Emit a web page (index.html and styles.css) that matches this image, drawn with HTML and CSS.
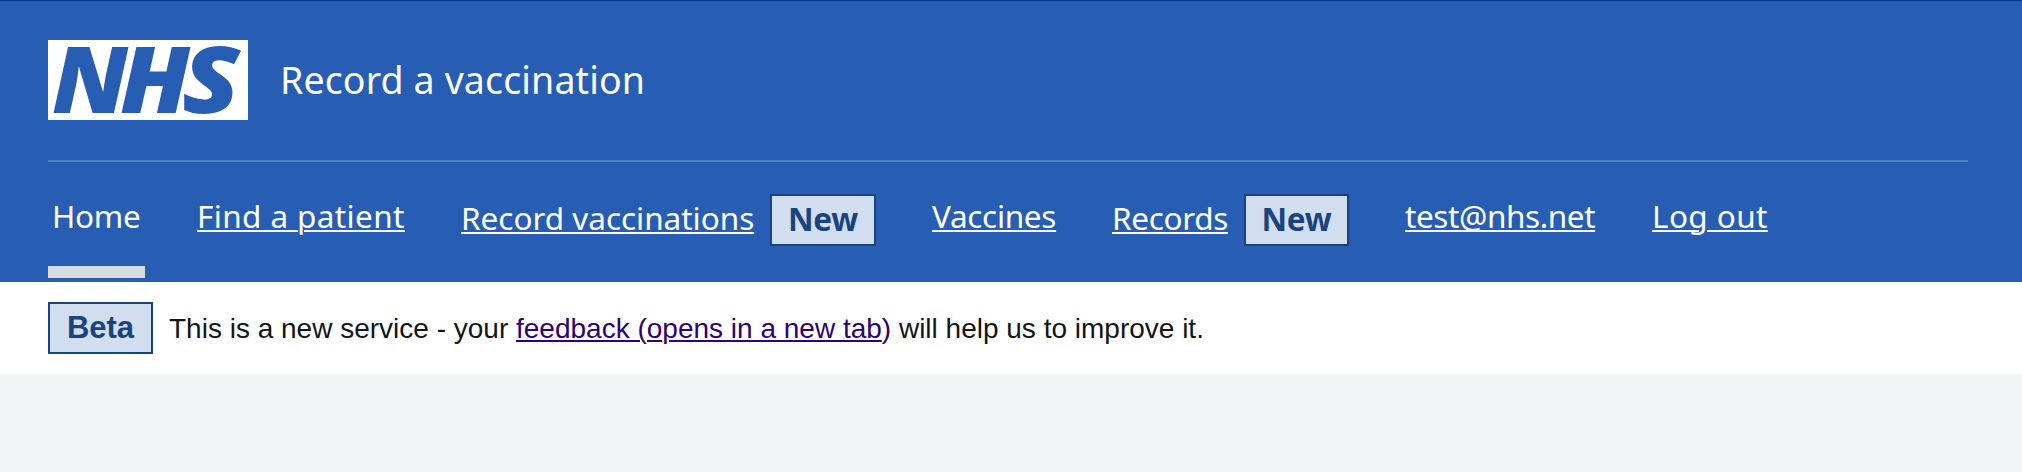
FILE: index.html
```html
<!DOCTYPE html>
<html lang="en">
<head>
<meta charset="utf-8">
<title>Record a vaccination</title>
<link rel="stylesheet" href="styles.css">
</head>
<body>
<header class="header">
  <div class="header-top">
    <svg class="logo" viewBox="0 0 200 80" role="img" aria-label="NHS">
      <rect width="200" height="80" fill="#fff"/>
      <text class="logo-letter" y="73" x="4" textLength="76" lengthAdjust="spacingAndGlyphs">N</text>
      <text class="logo-letter" y="73" x="72" textLength="70" lengthAdjust="spacingAndGlyphs">H</text>
      <text class="logo-letter" y="73" x="134" textLength="58" lengthAdjust="spacingAndGlyphs">S</text>
    </svg>
    <span class="service">Record a vaccination</span>
  </div>
  <nav class="nav">
    <a class="item current"><span class="label home">Home</span></a>
    <a class="item"><span class="label find">Find a patient</span></a>
    <a class="item tagged"><span class="label recvac">Record vaccinations</span><strong class="tag">New</strong></a>
    <a class="item"><span class="label vaccines">Vaccines</span></a>
    <a class="item tagged"><span class="label records">Records</span><strong class="tag narrow">New</strong></a>
    <a class="item"><span class="label email">test@nhs.net</span></a>
    <a class="item"><span class="label logout">Log out</span></a>
  </nav>
</header>
<div class="banner">
  <strong class="tag beta">Beta</strong>
  <p class="message">This is a new service - your <a class="feedback"><span class="underlined">feedback (opens in a new tab</span>)</a> will help us to improve it.</p>
</div>
</body>
</html>
```
FILE: styles.css
```css
* { box-sizing: border-box; }
body { margin: 0; background: #f0f4f5; font-family: "Noto Sans", sans-serif; }
.header { height: 282px; padding: 0 54px 0 48px; background: #275eb3; border-top: 1px solid #00368c; color: #fff; }
.header-top { height: 161px; padding-top: 39px; border-bottom: 2px solid #527ec2; display: flex; align-items: flex-start; gap: 32px; }
.logo { width: 200px; height: 80px; flex: none; overflow: visible; }
.logo-letter { font-family: "Open Sans", sans-serif; font-weight: 800; font-style: italic; font-size: 92px; fill: #275eb3; }
.service { font-size: 37.5px; line-height: 52px; padding-top: 14px; letter-spacing: .13px; white-space: nowrap; }
.nav { display: flex; gap: 48px; height: 118px; font-size: 31.5px; }
.item { display: flex; align-items: flex-start; gap: 16px; height: 116px; padding: 28px 4px 0; color: #fff; white-space: nowrap; }
.label { line-height: 52px; text-decoration: underline; text-decoration-thickness: 2px; text-underline-offset: 2px; }
.current { border-bottom: 12px solid #d8dde0; }
.current .label { text-decoration: none; }
.tagged { padding-top: 32px; }
.tagged .label { margin-top: -2px; }
.home { width: 89px; letter-spacing: -.3px; }
.find { width: 208px; letter-spacing: .38px; }
.recvac { width: 293px; letter-spacing: -.03px; }
.vaccines { width: 124px; letter-spacing: -.32px; }
.records { width: 116px; letter-spacing: -.35px; }
.email { width: 191px; letter-spacing: -.4px; text-decoration-skip-ink: none; }
.logout { width: 116px; letter-spacing: .4px; }
.tag { width: 106px; height: 52px; flex: none; border: 2px solid #1a437f; background: #d1deef; color: #1a437f; font-size: 31.5px; font-weight: 700; line-height: 46px; letter-spacing: -.3px; text-align: center; }
.narrow { width: 105px; }
.banner { height: 92px; padding: 20px 48px; background: #fff; display: flex; gap: 16px; font-family: "Liberation Sans", Arial, sans-serif; }
.beta { width: 105px; font-size: 31px; line-height: 48px; letter-spacing: 0; }
.message { margin: 0; color: #111617; font-size: 28px; line-height: 54px; white-space: nowrap; }
.feedback { color: #2f0071; }
.underlined { text-decoration: underline; text-decoration-thickness: 2px; text-underline-offset: 2px; }
```
